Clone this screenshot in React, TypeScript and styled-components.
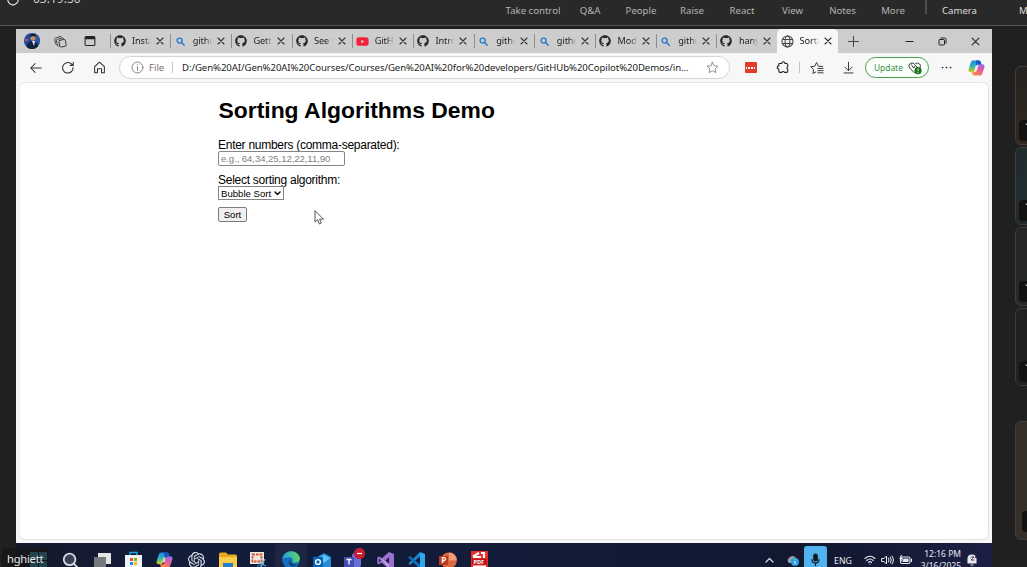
import React from "react";
import styled, { createGlobalStyle } from "styled-components";
import { FaGithub, FaYoutube } from "react-icons/fa";
import { SiOpenai } from "react-icons/si";

const Global = createGlobalStyle`
  * { box-sizing: border-box; }
  body { margin: 0; background: #202020; overflow: hidden; }
`;

const ui = `"Noto Sans", "Open Sans", sans-serif`;

const Screen = styled.div`
  position: relative;
  width: 1027px;
  height: 567px;
  overflow: hidden;
  display: flex;
  flex-direction: column;
  background: #202020;
  font-family: ${ui};
  svg { display: block; flex: none; }
`;

/* Meeting controls */
const MeetingBar = styled.header`
  height: 26px;
  flex: none;
  display: flex;
  background: #292929;
  border-bottom: 1px solid #565656;
  overflow: hidden;
`;
const Timer = styled.div`
  width: 505px;
  flex: none;
  display: flex;
  padding-left: 6px;
  gap: 13px;
  span { font-size: 12px; line-height: 16px; margin-top: -9px; color: #cfcfcf; }
  svg { margin-top: -8px; }
`;
const Control = styled.div<{ $w: number; $bright?: boolean }>`
  width: ${(p) => p.$w}px;
  flex: none;
  text-align: center;
  font-size: 9.6px;
  line-height: 14px;
  padding-top: 4px;
  white-space: nowrap;
  color: ${(p) => (p.$bright ? "#dedede" : "#b4b4b4")};
`;
const BarDivider = styled.div`
  width: 2px;
  height: 14px;
  flex: none;
  margin: 0 2px;
  background: #505050;
`;

const Stage = styled.div`
  flex: 1;
  display: flex;
  padding: 3px 0 0 16px;
`;
const Desktop = styled.div`
  width: 976px;
  flex: none;
  display: flex;
  flex-direction: column;
`;

/* Browser */
const Browser = styled.main`
  height: 514px;
  display: flex;
  flex-direction: column;
  background: #f7f7f7;
`;
const TabStrip = styled.div`
  height: 24px;
  flex: none;
  display: flex;
  background: #cdcdcd;
`;
const Slot = styled.div<{ $w: number }>`
  width: ${(p) => p.$w}px;
  flex: none;
  display: flex;
  align-items: center;
  justify-content: center;
`;
const Avatar = styled.div`
  width: 16px;
  height: 16px;
  border-radius: 50%;
  overflow: hidden;
`;
const Tab = styled.div<{ $active?: boolean }>`
  width: 60.7px;
  flex: none;
  display: flex;
  align-items: center;
  padding-left: 4px;
  background: ${(p) => (p.$active ? "#f7f7f7" : "transparent")};
  border-radius: ${(p) => (p.$active ? "5px 5px 0 0" : "0")};
  &::before {
    content: "";
    width: 1px;
    height: 14px;
    margin: 0 0 0 -4px;
    background: ${(p) => (p.$active ? "transparent" : "#8e8e8e")};
  }
`;
const TabIcon = styled.span`
  width: 13px;
  margin-left: 2.5px;
  display: flex;
  justify-content: center;
`;
const TabTitle = styled.span`
  width: 22px;
  margin: 0 2px 0 6px;
  font-size: 9.2px;
  line-height: 14px;
  letter-spacing: -0.1px;
  white-space: nowrap;
  color: #222;
  mask-image: linear-gradient(90deg, #000 55%, transparent 88%);
`;

const Toolbar = styled.div`
  height: 29px;
  flex: none;
  display: flex;
  align-items: center;
  padding-left: 4px;
`;
const Address = styled.div`
  width: 611px;
  height: 23px;
  flex: none;
  margin-left: 4px;
  display: flex;
  align-items: center;
  padding-left: 11px;
  background: #fff;
  border: 1px solid #d4d4d4;
  border-radius: 12px;
  font-size: 9.5px;
`;
const Scheme = styled.span`
  width: 23px;
  margin-left: 5px;
  color: #707070;
`;
const Rule = styled.span`
  width: 1px;
  height: 11px;
  background: #c4c4c4;
`;
const Url = styled.span`
  width: 524px;
  margin-left: 9px;
  white-space: nowrap;
  color: #222;
  font-size: 9.6px;
  letter-spacing: -0.075px;
`;
const RedBadge = styled.div`
  width: 12px;
  height: 11px;
  border-radius: 1px;
  background: #e23b2a;
  display: flex;
  align-items: center;
  justify-content: center;
  gap: 1px;
  i { width: 1.6px; height: 2px; background: #fff; }
`;
const Update = styled.div`
  width: 64px;
  height: 21px;
  flex: none;
  display: flex;
  align-items: center;
  justify-content: space-between;
  padding: 0 6px 0 8px;
  border: 1px solid #4b9a50;
  border-radius: 11px;
  background: #fbfffb;
  color: #3b8f42;
  font-size: 8.4px;
`;

const Page = styled.section`
  flex: 1;
  margin: 0 3px 3px;
  padding: 11px 0 0 199px;
  background: #fff;
  border: 1px solid #e4e4e4;
  border-left-color: #ededed;
  border-radius: 6px;
  font-family: "Liberation Sans", Arial, sans-serif;
  color: #000;
  font-size: 12px;
`;
const Title = styled.h1`
  margin: 0 0 12px -0.5px;
  font-size: 22.9px;
  line-height: 32px;
`;
const Form = styled.form`
  display: flex;
  flex-direction: column;
  align-items: flex-start;
  margin-left: -1px;
`;
const Label = styled.label`
  height: 13px;
  line-height: 14px;
  font-size: 12px;
  letter-spacing: -0.27px;
`;
const NumberInput = styled.input`
  width: 127px;
  height: 15px;
  margin-bottom: 7px;
  padding: 0 2px;
  border: 1px solid #858585;
  border-radius: 2px;
  font: 9.6px "Liberation Sans", Arial, sans-serif;
  letter-spacing: -0.08px;
  &::placeholder { color: #808080; }
`;
const SelectBox = styled.div`
  width: 66px;
  height: 14px;
  margin-bottom: 7px;
  padding: 0 2px;
  display: flex;
  align-items: center;
  justify-content: space-between;
  border: 1px solid #858585;
  font-size: 9.6px;
`;
const SortButton = styled.button`
  width: 29px;
  height: 15px;
  padding: 0;
  border: 1px solid #7b7b7b;
  border-radius: 2px;
  background: #efefef;
  font: 9.6px/12px "Liberation Sans", Arial, sans-serif;
  color: #000;
`;
const Pointer = styled.div`
  position: absolute;
  left: 314px;
  top: 210px;
`;

/* Taskbar */
const Taskbar = styled.footer`
  height: 24px;
  display: flex;
  overflow: hidden;
  padding-left: 7.2px;
  background: linear-gradient(90deg, #16192b, #121d3b 18%, #121a35 70%, #11182f 82%, #1b1f43);
`;
const TaskButton = styled.div<{ $open?: boolean }>`
  width: 31.5px;
  height: 32px;
  flex: none;
  margin-top: 1px;
  display: flex;
  align-items: center;
  justify-content: center;
  border-radius: 3px 3px 0 0;
  background: ${(p) => (p.$open ? "#1d2744" : "transparent")};
`;
const Tray = styled.div`
  display: flex;
  height: 34px;
  margin-left: auto;
  color: #e8eaf0;
`;
const Mic = styled.div`
  width: 23px;
  height: 32px;
  margin-top: 3px;
  display: flex;
  justify-content: center;
  padding-top: 7px;
  border-radius: 3px 3px 0 0;
  background: #50b2ee;
`;
const Lang = styled(Slot)`
  font-size: 8.7px;
  padding-top: 1px;
`;
const Clock = styled.div`
  width: 45px;
  padding-top: 5px;
  text-align: right;
  font-size: 8.5px;
  line-height: 12px;
  white-space: nowrap;
`;

/* Participant column */
const People = styled.aside`
  width: 35px;
  padding: 37px 0 0 23px;
`;
const Tile = styled.div<{ $h: number; $gap: number; $bg: string; $edge: string }>`
  width: 30px;
  height: ${(p) => p.$h}px;
  margin-bottom: ${(p) => p.$gap}px;
  display: flex;
  align-items: flex-end;
  padding: 0 0 3px 3px;
  border: 1px solid ${(p) => p.$edge};
  border-radius: 6px;
  background: ${(p) => p.$bg};
`;
const TileTag = styled.div<{ $inset?: boolean }>`
  width: 25px;
  height: 21px;
  flex: none;
  margin: 0 0 ${(p) => (p.$inset ? 4 : 0)}px ${(p) => (p.$inset ? 3 : 0)}px;
  padding: 3px 0 0 6px;
  border-radius: 4px;
  background: #131211;
`;
const NameTag = styled.div`
  position: absolute;
  left: 2px;
  top: 548px;
  width: 46px;
  height: 22px;
  padding-left: 5px;
  border-radius: 4px 4px 0 0;
  background: rgba(22, 22, 22, 0.74);
  color: #e6e6e6;
  font-size: 11.2px;
  letter-spacing: -0.25px;
  line-height: 22px;
`;

type IconProps = { w: number; h?: number; box?: string; color?: string; sw?: number; children: React.ReactNode };
const Icon = ({ w, h = w, box = "0 0 16 16", color = "#333", sw = 1.1, children }: IconProps) => (
  <svg width={w} height={h} viewBox={box} fill="none" stroke={color} strokeWidth={sw} strokeLinecap="round" strokeLinejoin="round">
    {children}
  </svg>
);

const Close = ({ s = 8 }: { s?: number }) => (
  <Icon w={s} box="0 0 8 8" color="#333" sw={1.1}><path d="M1 1l6 6M7 1L1 7" /></Icon>
);
const Search = () => (
  <Icon w={9} box="0 0 9 9" color="#2878c8" sw={1.4}><circle cx="3.6" cy="3.6" r="2.5" /><path d="M5.6 5.6l2.6 2.6" /></Icon>
);
const Globe = () => (
  <Icon w={13} color="#444" sw={1.3}><circle cx="8" cy="8" r="6.8" /><ellipse cx="8" cy="8" rx="3" ry="6.8" /><path d="M1.8 5.6h12.4M1.8 10.4h12.4" /></Icon>
);

const Copilot = () => (
  <svg width="17" height="16" viewBox="0 0 17 16">
    <defs>
      <linearGradient id="cpA" x1="0.3" y1="0" x2="0.4" y2="1"><stop stopColor="#2a7de8" /><stop offset=".45" stopColor="#2bb3c0" /><stop offset=".75" stopColor="#8bc34f" /><stop offset="1" stopColor="#f3c521" /></linearGradient>
      <linearGradient id="cpB" x1="0.8" y1="0" x2="0.3" y2="1"><stop stopColor="#9a6af0" /><stop offset=".5" stopColor="#ec5b9d" /><stop offset="1" stopColor="#fa8b3c" /></linearGradient>
    </defs>
    <path d="M5.200.5h5.600c1.200 0 1.700.7 2 1.800l.6 2.200h-2.600c-1.400 0-2 .7-2.400 2L7 10.600C6.600 11.900 6 12.300 4.700 12.300H2.800C.8 12.300.1 10.700.7 9L2.800 2.500C3.300 1.100 4 .5 5.200.5z" fill="url(#cpA)" />
    <path d="M11.800 15.500H6.400c-1.200 0-1.700-.7-2-1.800l-.5-1.400h2.400c1.400 0 2-.7 2.400-2L10 6.100C10.400 4.800 11 4.200 12.300 4.200h1.900c2 0 2.700 1.500 2.200 3.200L14.300 13.500c-.5 1.400-1.300 2-2.500 2z" fill="url(#cpB)" />
    <path d="M8 .5h2.800c1.200 0 1.700.7 2 1.800l.6 2.200h-2.600c-1.200 0-1.900.5-2.300 1.400z" fill="#1455c8" />
    <path d="M7.700 5.600h2.200L8.700 10.500H6.400z" fill="#f5f5fa" opacity=".85" />
  </svg>
);

const controls: [string, number][] = [
  ["Take control", 56], ["Q&A", 58], ["People", 44], ["Raise", 58], ["React", 42], ["View", 59], ["Notes", 41], ["More", 60],
];
const tabs: [string, string][] = [
  ["git", "Insta"], ["find", "githu"], ["git", "Getti"], ["git", "See w"], ["video", "GitH"], ["git", "Intro"],
  ["find", "githu"], ["find", "githu"], ["git", "Mod"], ["find", "githu"], ["git", "hany"], ["globe", "Sorti"],
];
const tabIcon = (kind: string) => {
  if (kind === "git") return <FaGithub size={12} color="#24292f" />;
  if (kind === "find") return <Search />;
  if (kind === "video") return <FaYoutube size={13} color="#f5213b" />;
  return <Globe />;
};

const taskIcons: React.ReactNode[] = [
  <svg width="17" height="17" viewBox="0 0 17 17"><path d="M0 0h8v8H0zM9 0h8v8H9zM0 9h8v8H0zM9 9h8v8H9z" fill="#45c0f5" /></svg>,
  <Icon w={17} box="0 0 17 17" color="#d8dade" sw={1.8}><circle cx="7.6" cy="7.4" r="5.8" fill="#39405a" /><path d="M12 12l4 4" /></Icon>,
  <svg width="18" height="16" viewBox="0 0 18 16"><path d="M5 1h13v11H5z" fill="#e4e4e4" /><path d="M1 5h12v10H1z" fill="#77797f" /></svg>,
  <svg width="17" height="18" viewBox="0 0 17 18"><path d="M5 4V1.500h7V4" fill="none" stroke="#2aa5dd" strokeWidth="1.4" /><path d="M0 4h17v11q0 3-3 3H3q-3 0-3-3z" fill="#eef2f6" /><path d="M5 7h3v3H5z" fill="#f25022" /><path d="M9 7h3v3H9z" fill="#7fba00" /><path d="M5 11h3v3H5z" fill="#1998df" /><path d="M9 11h3v3H9z" fill="#ffb900" /></svg>,
  <Copilot />,
  <SiOpenai size={17} color="#dfe1e5" />,
  <svg width="18" height="17" viewBox="0 0 18 17"><path d="M0 2q0-1.5 1.500-1.500H7l2 2h7.500Q18 2.500 18 4v12H0z" fill="#e6a81e" /><path d="M0 5h18v11H0z" fill="#fbcb4a" /><path d="M4 11h10v6H4z" fill="#1f7ed0" /></svg>,
  <svg width="18" height="18" viewBox="0 0 18 18"><path d="M0 1h14v12H0z" fill="#ede7e3" /><path d="M2.500 3.500h9v7h-9z" fill="none" stroke="#d35633" strokeWidth="1.800" strokeDasharray="2.500 1" /><path d="M9 12l7 3M15 8l-4 8" stroke="#4da5d9" strokeWidth="1.300" /><circle cx="9.500" cy="15.500" r="1.600" fill="none" stroke="#4da5d9" /></svg>,
  <svg width="18" height="18" viewBox="0 0 18 18"><defs><linearGradient id="edgeTop" x1="0" x2="1"><stop stopColor="#249fdd" /><stop offset="1" stopColor="#5dd467" /></linearGradient></defs><circle cx="9" cy="9" r="8.800" fill="#1470bd" /><path d="M.3 8C1 3.500 4.500.2 9 .2c5 0 8.800 3.300 8.800 7.200 0 2.700-2 4.400-4.600 4.400-2 0-3.200-.8-2.700-1.700.7-1.300-.2-3.800-3-3.800C4.800 6.300 1.500 7 .3 8z" fill="url(#edgeTop)" /><path d="M7.500 9c-2 2.500.5 6.800 5 6.300l4-2c-3 1.300-7.500.4-9-4.300z" fill="#123c78" /></svg>,
  <svg width="18" height="17" viewBox="0 0 18 17"><path d="M4 5l7-4 7 4v12H4z" fill="#258bd8" /><path d="M5 6l6-3 6 3-6 5z" fill="#65c5f5" /><path d="M0 5h10v10H0z" fill="#0864b8" /><circle cx="5" cy="10" r="2.400" fill="none" stroke="#fff" strokeWidth="1.400" /></svg>,
  <svg width="24" height="24" viewBox="0 0 24 24"><circle cx="13" cy="8" r="3" fill="#6a72dc" /><path d="M8 10h11v7q-1 4-5 4t-6-4z" fill="#686fd5" /><path d="M2 9h10v10H2z" fill="#454db0" /><path d="M4.500 11.500h5M7 11.500v5" stroke="#fff" strokeWidth="1.300" /><circle cx="17.500" cy="5.500" r="5.600" fill="#c71e35" /><path d="M15 5.500h5" stroke="#fff" strokeWidth="1.200" /></svg>,
  <svg width="17" height="17" viewBox="0 0 17 17"><path d="M12 0l5 2v13l-5 2L4.500 10.500 2 12.500.3 11.500v-6L2 4.500l2.500 2z" fill="#9b70cf" /><path d="M12 5v7L8.500 8.500zM2 6.500L4 8.500 2 10.500z" fill="#1b1e3e" /><path d="M2 4.500l10 12.500V12L4.500 6.500z" fill="#c49cec" /></svg>,
  <svg width="17" height="17" viewBox="0 0 17 17"><path d="M12 0l5 2v13l-5 2z" fill="#2fa5ec" /><path d="M12 0v4.500L2 13 .3 11.500z" fill="#1a86d0" /><path d="M12 17v-4.500L2 4 .3 5.500z" fill="#0d6fb9" /></svg>,
  <svg width="18" height="17" viewBox="0 0 18 17"><circle cx="9.800" cy="8.500" r="8" fill="#de6740" /><path d="M10 .5a8 8 0 0 1 8 8h-8z" fill="#f19b78" /><path d="M0 4h9v9H0z" fill="#bd3a1b" /><text x="2.200" y="11.300" fontSize="8" fontWeight="700" fill="#fff">P</text></svg>,
  <svg width="17" height="18" viewBox="0 0 17 18"><path d="M0 0h17v18H0z" fill="#ed2c28" /><path d="M2 5.500L8 2M10 2h3v5M2 6h8" stroke="#fff" strokeWidth="2.200" fill="none" /><path d="M1 7.500h15v6H1z" fill="#bd1717" /><text x="2.600" y="12.600" fontSize="5.500" fontWeight="700" fill="#fff">PDF</text><path d="M2 15.500h13" stroke="#fff" strokeWidth="2" /></svg>,
];

const tiles: [number, number, string, string][] = [
  [79, 2, "linear-gradient(#252321, #302820)", "#443c35"],
  [78, 2, "radial-gradient(#213031, #20292b)", "#3a3f40"],
  [79, 2, "linear-gradient(#252526, #25292a)", "#403b3d"],
  [78, 35, "#222120", "#3e3a36"],
  [119, 0, "linear-gradient(#352f29, #35302b)", "#403d3a"],
];

export default function App() {
  return (
    <Screen>
      <Global />
      <MeetingBar>
        <Timer>
          <Icon w={14} color="#ddd" sw={1.3}><path d="M8 1.500l6 2v5c0 3-2.500 5.500-6 6.500-3.500-1-6-3.500-6-6.500v-5z" /></Icon>
          <span>03:19:50</span>
        </Timer>
        {controls.map(([name, w]) => <Control key={name} $w={w}>{name}</Control>)}
        <BarDivider />
        <Control $w={61} $bright>Camera</Control>
        <Control $w={74} $bright>Mic</Control>
      </MeetingBar>

      <Stage>
        <Desktop>
          <Browser>
            <TabStrip>
              <Slot $w={31}>
                <Avatar>
                  <svg width="16" height="16" viewBox="0 0 16 16"><path d="M0 0h16v16H0z" fill="#1b4ba1" /><path d="M10 0h6v9h-6z" fill="#34559a" /><path d="M1 6h3v2H1z" fill="#d64b4b" /><path d="M2 16l2-6 4-2 5 2 2 6z" fill="#14213c" /><path d="M8 8l2 5 1-5z" fill="#e5e9f0" /><circle cx="9" cy="5" r="2.700" fill="#bd8970" /><path d="M6 4q0-3 3-3t3 3l-3-1z" fill="#1b1818" /></svg>
                </Avatar>
              </Slot>
              <Slot $w={26}>
                <Icon w={13} color="#333" sw={1.1}><rect x="6.500" y="6" width="8" height="8.500" rx="1.500" transform="rotate(-10 10 10)" /><path d="M5.500 13.500l-1.300-.4L3 7q-.3-1.300 1-1.700l6-1.700q1.300-.3 1.700 1M2.800 11.500l-1-.8-.8-5Q.8 4.300 2 3.800l5.500-2q1.200-.4 1.700.6" /></Icon>
              </Slot>
              <Slot $w={33}>
                <Icon w={12} color="#222" sw={1.4}><rect x="1.500" y="2" width="13" height="12" rx="1.500" /><path d="M2.500 4h11" strokeWidth="3" /></Icon>
              </Slot>
              <Slot $w={3.5} />
              {tabs.map(([kind, name], i) => (
                <Tab key={i} $active={i === 11}>
                  <TabIcon>{tabIcon(kind)}</TabIcon>
                  <TabTitle>{name}</TabTitle>
                  <Close />
                </Tab>
              ))}
              <Slot $w={31}><Icon w={11} box="0 0 11 11" color="#444" sw={1}><path d="M5.500.5v10M.5 5.500h10" /></Icon></Slot>
              <Slot $w={24} />
              <Slot $w={33}><Icon w={9} box="0 0 9 9" color="#222" sw={1}><path d="M1 4.500h7" /></Icon></Slot>
              <Slot $w={33}><Icon w={9} box="0 0 9 9" color="#222" sw={1}><rect x="1" y="2.500" width="5.500" height="5.500" rx="1" /><path d="M3 1h3.500Q8 1 8 2.500V6" /></Icon></Slot>
              <Slot $w={34}><Close s={9} /></Slot>
            </TabStrip>

            <Toolbar>
              <Slot $w={32}><Icon w={14} sw={1.2}><path d="M14 8H2M7 3L2 8l5 5" /></Icon></Slot>
              <Slot $w={31}><Icon w={14} sw={1.2}><path d="M13.800 7.500A6 6 0 1 1 11.500 3L14 5M14 1.500V5h-3.500" /></Icon></Slot>
              <Slot $w={32}><Icon w={13} sw={1.3}><path d="M2 7l6-5.500L14 7v7.500h-3.500V9.500h-5v5H2z" /></Icon></Slot>
              <Address>
                <Icon w={13} color="#777" sw={1.1}><circle cx="8" cy="8" r="6.700" /><path d="M8 7v4.500M8 4.500v.2" /></Icon>
                <Scheme>File</Scheme>
                <Rule />
                <Url>D:/Gen%20AI/Gen%20AI%20Courses/Courses/Gen%20AI%20for%20developers/GitHUb%20Copilot%20Demos/in...</Url>
                <Icon w={13} color="#888" sw={1.1}><path d="M8 1.500l2 4.300 4.700.6-3.400 3.200.9 4.700L8 12l-4.200 2.300.9-4.700L1.300 6.400 6 5.800z" /></Icon>
              </Address>
              <Slot $w={5} />
              <Slot $w={31}><RedBadge><i /><i /><i /><i /></RedBadge></Slot>
              <Slot $w={32}><Icon w={13} color="#222" sw={1.3}><path d="M4 3h3a2 2 0 0 1 4 0h2q1.500 0 1.500 1.500V7a2 2 0 0 0 0 3.500v2Q14.500 14 13 14h-2.500a2 2 0 0 0-3.500 0H5q-1.500 0-1.500-1.500V10a2 2 0 0 1 0-4V3.500z" /></Icon></Slot>
              <Slot $w={3}><Rule /></Slot>
              <Slot $w={32}><Icon w={14} sw={1.1}><path d="M14.500 6.300L9.700 6 7.500 1.700 5.400 6l-4.500.6L4.200 9.800l-.8 4.500 3.200-1.700M9 8.500h6M9 11h6M9 13.500h6" /></Icon></Slot>
              <Slot $w={31}><Icon w={13} sw={1.2}><path d="M8 1.500v10M3.500 7.500L8 12l4.500-4.500M2.500 14.700h11" /></Icon></Slot>
              <Slot $w={1} />
              <Update>
                Update
                <Icon w={14} box="0 0 17 16" color="#253525" sw={1.2}><path d="M8 14L2 8C.5 6 1 3 3.500 2.200 5.500 1.500 7 2.300 8 3.800c1-1.500 3-2.200 5-1.400 2 .9 2.700 3 1.700 5M4 4l3 4 2-3 3 3" /><circle cx="12.200" cy="11.200" r="4.300" fill="#176f1c" stroke="none" /><path d="M12.200 9v2.500M12.200 13.500v.1" stroke="#fff" /></Icon>
              </Update>
              <Slot $w={34}><Icon w={11} box="0 0 11 3" h={3} color="#222" sw={1.7}><path d="M1.500 1.500h.1M5.500 1.500h.1M9.500 1.500h.1" /></Icon></Slot>
              <Slot $w={27}><Copilot /></Slot>
            </Toolbar>

            <Page>
              <Title>Sorting Algorithms Demo</Title>
              <Form>
                <Label>Enter numbers (comma-separated):</Label>
                <NumberInput placeholder="e.g., 64,34,25,12,22,11,90" />
                <Label>Select sorting algorithm:</Label>
                <SelectBox>
                  Bubble Sort
                  <Icon w={7} h={5} box="0 0 7 5" color="#111" sw={1.5}><path d="M1 1l2.500 2.500L6 1" /></Icon>
                </SelectBox>
                <SortButton type="button">Sort</SortButton>
              </Form>
            </Page>
          </Browser>

          <Taskbar>
            {taskIcons.map((icon, i) => <TaskButton key={i} $open={i === 8}>{icon}</TaskButton>)}
            <Tray>
              <Slot $w={22}><Icon w={9} h={6} box="0 0 9 6" color="#ddd" sw={1.2}><path d="M1 5l3.500-3.500L8 5" /></Icon></Slot>
              <Slot $w={24}>
                <svg width="13" height="11" viewBox="0 0 13 11"><path d="M3 8a3 3 0 0 1 0-5 4 4 0 0 1 7 0l1 5z" fill="#999da8" /><circle cx="9" cy="7" r="4" fill="#2b9fe3" /><path d="M9 6v3M9 4.500v.5" stroke="#fff" /></svg>
              </Slot>
              <Mic><Icon w={11} h={14} box="0 0 11 14" color="#101820" sw={1.2}><rect x="3.800" y="1" width="3.400" height="7" rx="1.700" fill="#101820" /><path d="M2 6.500a3.500 3.500 0 0 0 7 0M5.500 10v2.500" /></Icon></Mic>
              <Lang $w={32}>ENG</Lang>
              <Slot $w={22}><Icon w={12} h={10} box="0 0 12 10" color="#e8eaf0" sw={1.1}><path d="M1 3.500q5-4.500 10 0M2.700 5.500q3.300-3 6.600 0M4.400 7.300q1.600-1.400 3.200 0M6 9v.1" /></Icon></Slot>
              <Slot $w={13}><Icon w={13} h={10} box="0 0 13 10" color="#e8eaf0" sw={1}><path d="M1 3.500h2L5.500 1v8L3 6.500H1zM7.500 3q1.500 2 0 4M9.300 2q2.200 3 0 6M11 1q3 4 0 8" /></Icon></Slot>
              <Slot $w={22}><Icon w={13} h={10} box="0 0 13 10" color="#e8eaf0" sw={1.1}><rect x="1.500" y="2" width="9.500" height="6.500" rx="1.500" /><path d="M5 4h4v2.500H4zM12.500 4v2.500" fill="#e8eaf0" /><path d="M2.500 0L1 3.500h2.500L2 6" /></Icon></Slot>
              <Clock>12:16 PM<br />3/16/2025</Clock>
              <Slot $w={22}><Icon w={12} box="0 0 12 12" color="#e8eaf0" sw={1.1}><path d="M2 9V5q0-4 4-4 4 0 4 4v4zM5 11h2" fill="#e8eaf0" /><path d="M5 3h3L5 6h3M9 1h2L9 3.500h2" stroke="#1b1f43" strokeWidth=".8" /></Icon></Slot>
              <Slot $w={9} />
            </Tray>
          </Taskbar>
        </Desktop>
        <People>
          {tiles.map(([h, gap, bg, edge], i) => (
            <Tile key={i} $h={h} $gap={gap} $bg={bg} $edge={edge}>
              <TileTag $inset={i === 4}>{i < 4 && <Icon w={5} h={4} box="0 0 5 4" color="#ddd"><path d="M1 1l2 1" /></Icon>}</TileTag>
            </Tile>
          ))}
        </People>
      </Stage>
      <Pointer>
        <Icon w={10} h={15} box="0 0 10 15" color="#444" sw={0.9}><path d="M1 1v11l2.600-2.300L5.300 14l2-1-1.700-3.800H9z" fill="#fff" /></Icon>
      </Pointer>
      <NameTag>hghiett</NameTag>
    </Screen>
  );
}
